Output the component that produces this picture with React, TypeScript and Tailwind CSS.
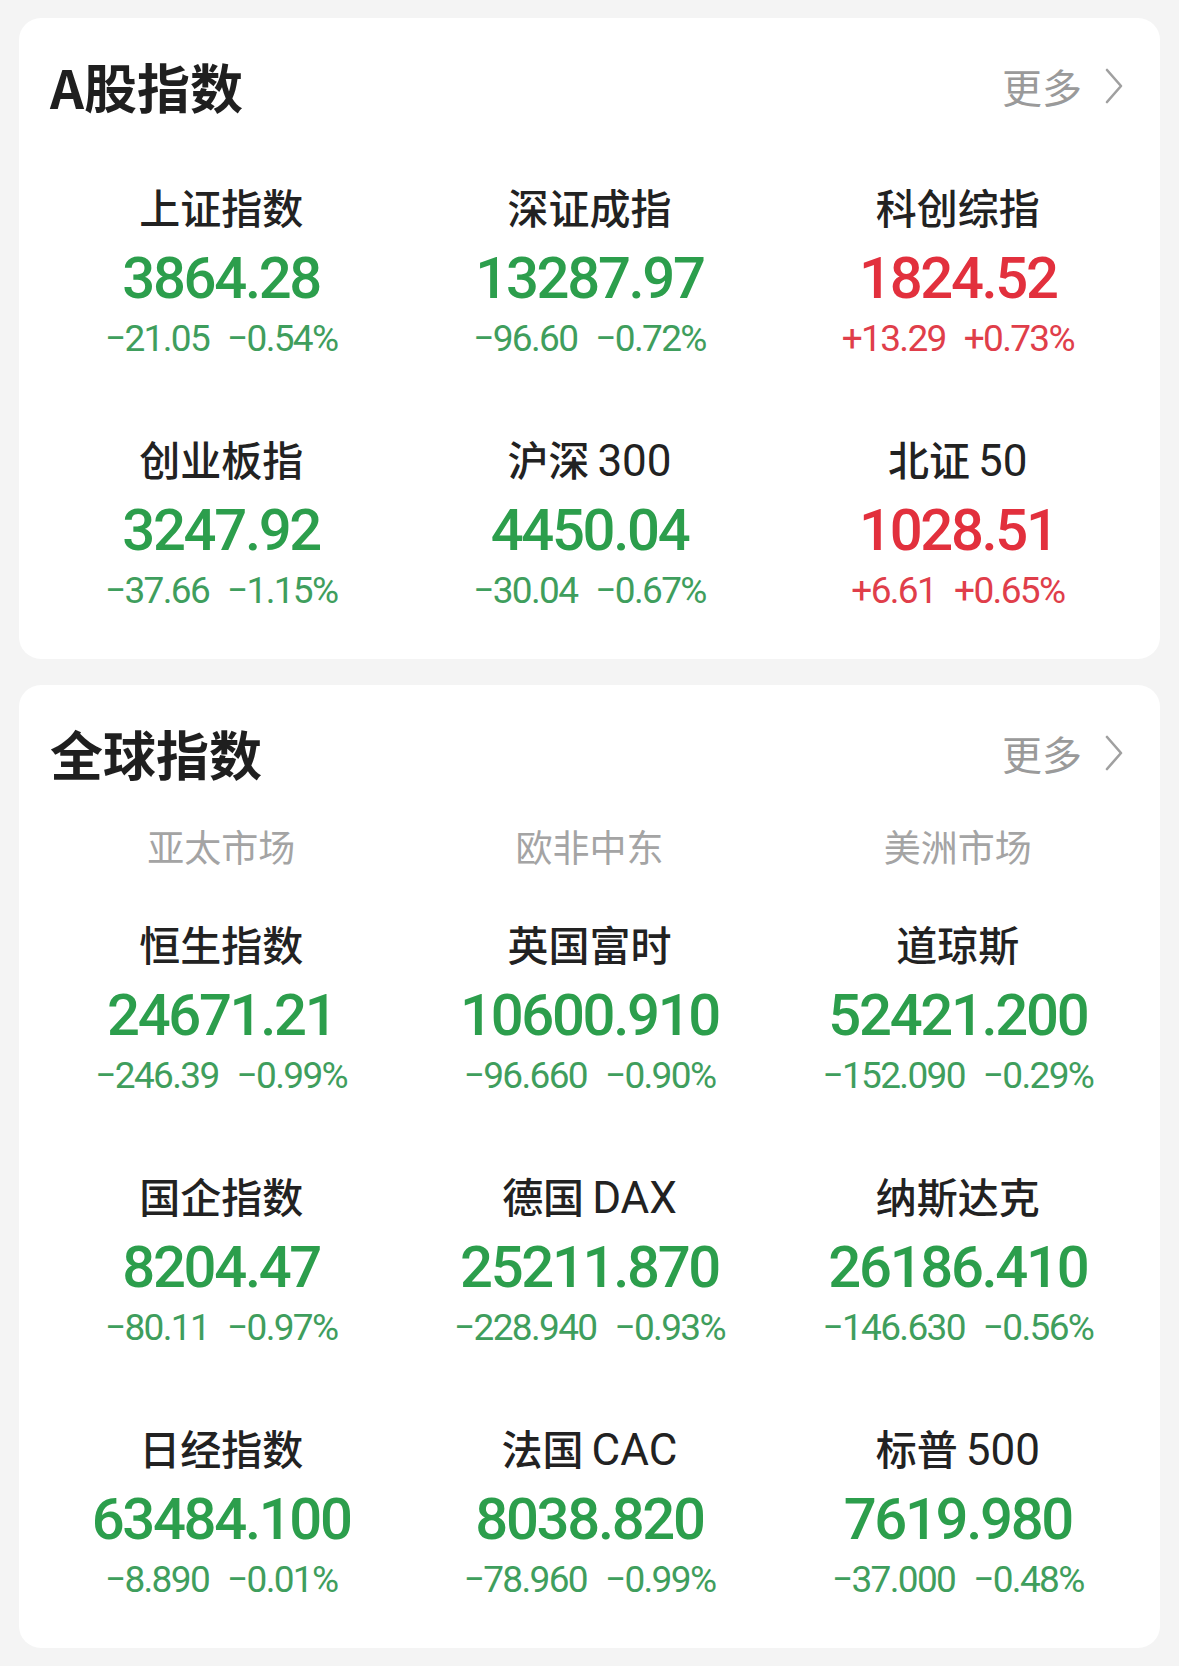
import React from 'react';

type Quote = {
  name: string;
  suffix?: string;
  value: string;
  change: string;
  pct: string;
  up?: boolean;
};

const aShares: Quote[] = [
  { name: '上证指数', value: '3864.28', change: '−21.05', pct: '−0.54%' },
  { name: '深证成指', value: '13287.97', change: '−96.60', pct: '−0.72%' },
  { name: '科创综指', value: '1824.52', change: '+13.29', pct: '+0.73%', up: true },
  { name: '创业板指', value: '3247.92', change: '−37.66', pct: '−1.15%' },
  { name: '沪深', suffix: '300', value: '4450.04', change: '−30.04', pct: '−0.67%' },
  { name: '北证', suffix: '50', value: '1028.51', change: '+6.61', pct: '+0.65%', up: true },
];

const markets = ['亚太市场', '欧非中东', '美洲市场'];

const globalIdx: Quote[] = [
  { name: '恒生指数', value: '24671.21', change: '−246.39', pct: '−0.99%' },
  { name: '英国富时', value: '10600.910', change: '−96.660', pct: '−0.90%' },
  { name: '道琼斯', value: '52421.200', change: '−152.090', pct: '−0.29%' },
  { name: '国企指数', value: '8204.47', change: '−80.11', pct: '−0.97%' },
  { name: '德国', suffix: 'DAX', value: '25211.870', change: '−228.940', pct: '−0.93%' },
  { name: '纳斯达克', value: '26186.410', change: '−146.630', pct: '−0.56%' },
  { name: '日经指数', value: '63484.100', change: '−8.890', pct: '−0.01%' },
  { name: '法国', suffix: 'CAC', value: '8038.820', change: '−78.960', pct: '−0.99%' },
  { name: '标普', suffix: '500', value: '7619.980', change: '−37.000', pct: '−0.48%' },
];

const cjk = "font-['Noto_Sans_CJK_SC',sans-serif]";
const num = "font-['Roboto','Noto_Sans_CJK_SC',sans-serif]";

function Header({ title }: { title: string }) {
  return (
    <div className="flex items-center justify-between pl-[31px] pr-[36px] pt-[38px]">
      <h2 className={`${cjk} text-[53px] leading-[60px] font-bold text-[#1f1f1f]`}>{title}</h2>
      <button className="flex items-center gap-[22px] text-[#9a9a9a]">
        <span className={`${cjk} text-[40px] leading-[60px]`}>更多</span>
        <svg width="20" height="36" viewBox="0 0 20 36" fill="none">
          <path d="M3 2 L17 18 L3 34" stroke="#a0a0a0" strokeWidth="2.6" strokeLinecap="round" strokeLinejoin="round" />
        </svg>
      </button>
    </div>
  );
}

function Cell({ q }: { q: Quote }) {
  const valueColor = q.up ? 'text-[#e2303d]' : 'text-[#2c9e4c]';
  const changeColor = q.up ? 'text-[#e03e4a]' : 'text-[#3f9e5d]';
  return (
    <div className="flex flex-col items-center">
      <div className={`${cjk} flex h-[48px] items-baseline text-[41px] leading-[48px] font-medium text-[#222]`}>
        <span>{q.name}</span>
        {q.suffix && <span className={`${num} ml-[8px] text-[44px] font-normal`}>{q.suffix}</span>}
      </div>
      <div className={`${num} mt-[16px] h-[64px] text-[58px] leading-[64px] font-medium tracking-[-0.04em] ${valueColor}`}>
        {q.value}
      </div>
      <div className={`${num} mt-[7px] flex h-[44px] gap-[18px] text-[37px] leading-[44px] tracking-[-0.045em] ${changeColor}`}>
        <span>{q.change}</span>
        <span>{q.pct}</span>
      </div>
    </div>
  );
}

export default function App() {
  return (
    <div className="min-h-screen bg-[#f4f4f4] px-[19px] pt-[18px] pb-[20px]">
      <section className="rounded-[22px] bg-white pb-[46px]">
        <Header title="A股指数" />
        <div className="mt-[66px] grid grid-cols-3 gap-y-[73px] px-[18px]">
          {aShares.map((q) => (
            <Cell key={q.name + (q.suffix ?? '')} q={q} />
          ))}
        </div>
      </section>

      <section className="mt-[26px] rounded-[22px] bg-white pb-[46px]">
        <Header title="全球指数" />
        <div className="mt-[41px] grid grid-cols-3 px-[18px]">
          {markets.map((m) => (
            <div key={m} className={`${cjk} text-center text-[37px] leading-[44px] text-[#a4a4a4]`}>
              {m}
            </div>
          ))}
        </div>
        <div className="mt-[51px] grid grid-cols-3 gap-y-[73px] px-[18px]">
          {globalIdx.map((q) => (
            <Cell key={q.name + (q.suffix ?? '')} q={q} />
          ))}
        </div>
      </section>
    </div>
  );
}
